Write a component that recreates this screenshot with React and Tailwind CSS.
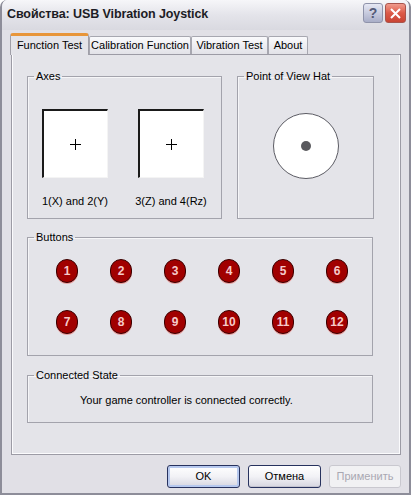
import React from "react"

function Cross(){
return(
<svg width="11" height="11" viewBox="0 0 11 11">
<path d="M5.5 0V11M0 5.5H11" stroke="#000" strokeWidth="1" shapeRendering="crispEdges"/>
</svg>
)
}

function AxisBox({label}){
return(
<div className="flex flex-col items-center w-[66px]">
<div className="w-[66px] h-[69px] bg-white border-t-2 border-l-2 border-t-[#1a1a1a] border-l-[#1a1a1a] border-r border-b border-r-[#f4f4f4] border-b-[#f4f4f4] flex items-center justify-center">
<Cross/>
</div>
<div className="mt-[17px] whitespace-nowrap leading-[13px]">{label}</div>
</div>
)
}

// group box, padding goes on the inner div so the legend stays put
function Group({title,className,inner,children}){
return(
<fieldset className={"border border-[#a3a3ac] shadow-[inset_1px_1px_0_#f6f6f8] " + className}>
<legend className="ml-[6px] px-[2px] leading-[13px]">{title}</legend>
<div className={inner}>
{children}
</div>
</fieldset>
)
}

function RedButton({n}){
return(
<div className="w-[22px] h-[24px] rounded-full bg-[#a10000] border border-[#3a0000] shadow-[0_1px_0_#e7a0a0] flex items-center justify-center text-[12px] font-bold text-[#f6caca] leading-none">
{n}
</div>
)
}

function Tab({label,active,width}){
if(active){
return(
<div className={"relative z-10 -mb-[1px] h-[22px] bg-[#e4e4e9] border-x border-[#a09fa8] border-t-[3px] border-t-[#e8963a] rounded-t-[3px] flex items-center justify-center leading-[13px] " + width}>
{label}
</div>
)
}
return(
<div className={"h-[18px] bg-gradient-to-b from-[#fafafc] to-[#e2e2e8] border-x border-t border-[#a7a7b0] rounded-t-[2px] flex items-center justify-center leading-[13px] " + width}>
{label}
</div>
)
}

function DlgButton({label,primary,disabled}){
if(disabled){
return(
<div className="w-[72px] h-[23px] rounded-[3px] border border-[#c9c8cf] bg-[#f1f1f3] flex items-center justify-center text-[#a9a8b2]">
{label}
</div>
)
}
return(
<div className={"w-[73px] h-[23px] rounded-[3px] border border-[#27325e] bg-gradient-to-b from-[#ffffff] via-[#f2f2f6] to-[#d6d6e0] flex items-center justify-center " + (primary ? "shadow-[inset_0_0_0_2px_#b6c8ee]" : "shadow-[inset_0_-1px_0_#c3c3cf]")}>
{label}
</div>
)
}

export default function App(){

const buttons=[1,2,3,4,5,6,7,8,9,10,11,12]

return(

<div className="w-[411px] h-[495px] bg-[#e1e0e6] flex flex-col font-['Liberation_Sans',Arial,sans-serif] text-[11px] text-black border-x-2 border-b-2 border-[#8d8d99] rounded-t-[7px] overflow-hidden">

{/* TITLE */}

<div className="h-[30px] shrink-0 flex items-center pl-[5px] pr-[3px] bg-gradient-to-b from-[#f6f6f9] via-[#e4e4ea] to-[#d9d9e0]">

<div className="text-[12.5px] font-bold text-[#1c1c24] tracking-[-0.1px] -mt-[2px]">
Свойства: USB Vibration Joystick
</div>

<div className="ml-auto flex gap-[2px] -mt-[4px]">

<div className="w-[20px] h-[20px] rounded-[3px] border border-[#8f93aa] bg-gradient-to-b from-[#e6e8f4] to-[#a9aec8] flex items-center justify-center text-[14px] font-bold text-[#545a78]">
?
</div>

<div className="w-[21px] h-[20px] rounded-[3px] border border-[#a8544c] bg-gradient-to-b from-[#ef9a8c] via-[#dc5a48] to-[#c94434] flex items-center justify-center">
<svg width="11" height="11" viewBox="0 0 11 11">
<path d="M1 1L10 10M10 1L1 10" stroke="#fff" strokeWidth="2"/>
</svg>
</div>

</div>

</div>

{/* BODY */}

<div className="flex flex-col pl-[8px]">

{/* TABS */}

<div className="h-[24px] flex items-end">
<Tab label="Function Test" active width="w-[79px]"/>
<Tab label="Calibration Function" width="w-[102px]"/>
<Tab label="Vibration Test" width="w-[77px]"/>
<Tab label="About" width="w-[40px]"/>
</div>

{/* PANEL */}

<div className="ml-[1px] w-[390px] h-[401px] bg-[#e4e4e9] border border-[#9c9ba5] shadow-[inset_1px_0_0_#fbfbfd,inset_0_-1px_0_#fbfbfd,inset_-1px_0_0_#fbfbfd] flex flex-col">

{/* TOP ROW */}

<div className="flex mt-[15px] ml-[15px]">

<Group title="Axes" className="w-[195px] h-[149px]" inner="pt-[26px] pl-[14px]">
<div className="flex gap-[30px]">
<AxisBox label="1(X) and 2(Y)"/>
<AxisBox label="3(Z) and 4(Rz)"/>
</div>
</Group>

<Group title="Point of View Hat" className="ml-[15px] w-[137px] h-[149px]" inner="pt-[30px] flex justify-center">
<div className="w-[66px] h-[66px] rounded-full bg-white border border-[#5c5c64] flex items-center justify-center">
<div className="w-[10px] h-[10px] rounded-full bg-[#5a5a5e]"></div>
</div>
</Group>

</div>

{/* BUTTONS */}

<Group title="Buttons" className="mt-[12px] ml-[15px] w-[346px] h-[125px]" inner="pt-[15px] pl-[28px]">
<div className="grid grid-cols-6 w-[292px] gap-y-[27px] gap-x-[32px]">
{buttons.map(n=>(
<RedButton key={n} n={n}/>
))}
</div>
</Group>

{/* CONNECTED */}

<Group title="Connected State" className="mt-[13px] ml-[15px] w-[346px] h-[54px]" inner="pt-[12px] pl-[52px] leading-[13px]">
Your game controller is connected correctly.
</Group>

</div>

{/* DIALOG BUTTONS */}

<div className="flex mt-[10px] pl-[157px] gap-[8px]">
<DlgButton label="OK" primary/>
<DlgButton label="Отмена"/>
<DlgButton label="Применить" disabled/>
</div>

</div>

</div>

)

}
